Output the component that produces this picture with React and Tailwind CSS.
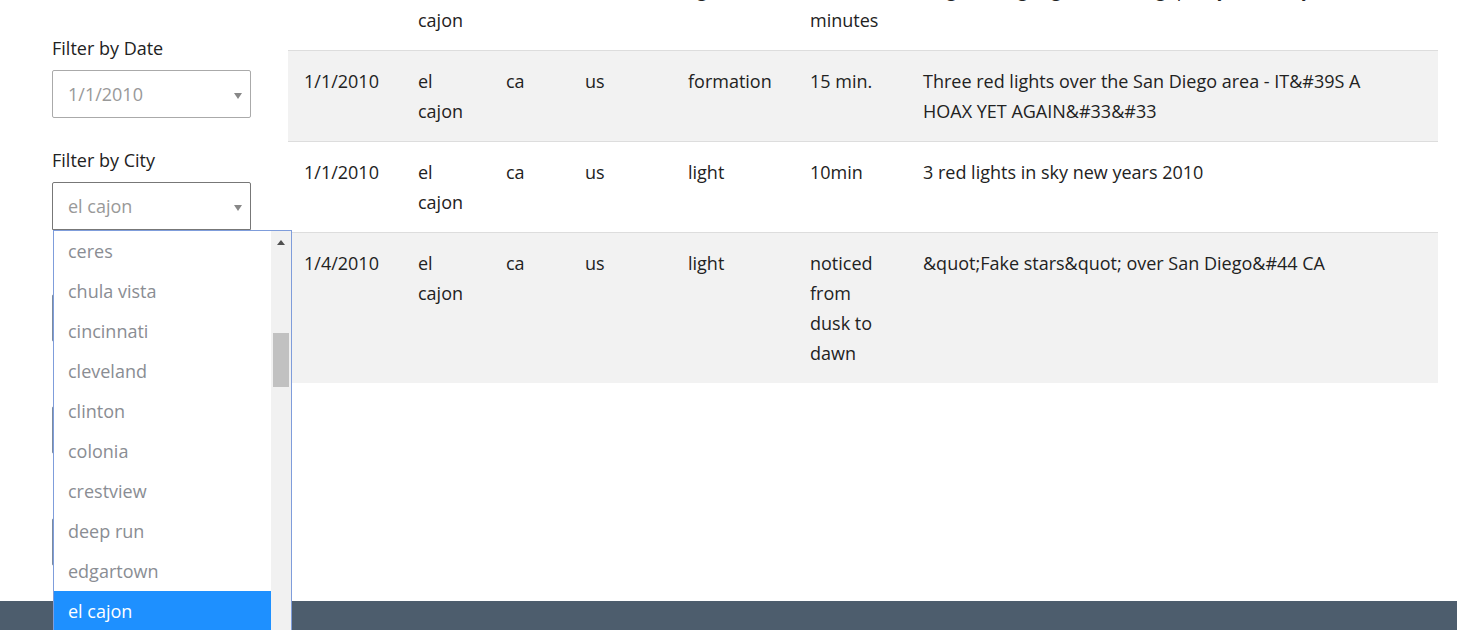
import React from "react";

const rows = [
  ["1/1/2010", "el cajon", "ca", "us", "light", "15 minutes", "Bright orange lights hovering quietly in the sky"],
  ["1/1/2010", "el cajon", "ca", "us", "formation", "15 min.", "Three red lights over the San Diego area - IT&#39S A HOAX YET AGAIN&#33&#33"],
  ["1/1/2010", "el cajon", "ca", "us", "light", "10min", "3 red lights in sky new years 2010"],
  ["1/4/2010", "el cajon", "ca", "us", "light", "noticed from dusk to dawn", "&quot;Fake stars&quot; over San Diego&#44 CA"],
];

const cities = [
  "ceres",
  "chula vista",
  "cincinnati",
  "cleveland",
  "clinton",
  "colonia",
  "crestview",
  "deep run",
  "edgartown",
  "el cajon",
  "el centro",
];

function Caret() {
  return (
    <svg width="8" height="6" viewBox="0 0 8 6" className="absolute right-[8px] top-[22px]">
      <path d="M0 0 L8 0 L4 6 Z" fill="#888" />
    </svg>
  );
}

function Filter({ label, children }) {
  return (
    <div className="mb-[30px] last:mb-0 relative">
      <label className="block h-[24px] leading-[24px] mb-[10px] text-[18px] text-[#222]">{label}</label>
      {children}
    </div>
  );
}

function CityDropdown() {
  return (
    <div className="absolute left-px top-full w-[239px] h-[402px] bg-white border border-[#7f9ddb] flex overflow-hidden z-10">
      <ul className="flex-1">
        {cities.map((c) => (
          <li
            key={c}
            className={
              c === "el cajon"
                ? "h-[40px] leading-[40px] pl-[14px] text-[18px] bg-[#1e90ff] text-white"
                : "h-[40px] leading-[40px] pl-[14px] text-[18px] text-[#8a8d93]"
            }
          >
            {c}
          </li>
        ))}
      </ul>
      <div className="w-[20px] bg-[#f1f1f1] flex flex-col items-center">
        <svg width="8" height="5" viewBox="0 0 8 5" className="mt-[9px]">
          <path d="M0 5 L8 5 L4 0 Z" fill="#505050" />
        </svg>
        <div className="mt-[88px] w-[16px] h-[54px] bg-[#c1c1c1]" />
      </div>
    </div>
  );
}

export default function App() {
  return (
    <div className="min-h-screen flex flex-col bg-white" style={{ fontFamily: '"Open Sans", "Noto Sans", sans-serif' }}>
      <div className="flex flex-1">
        <aside className="w-[288px] shrink-0 pl-[52px] pt-[36px] pb-[35px]">
          <Filter label="Filter by Date">
            <div className="relative w-[199px] h-[48px] border border-[#aaa] rounded-[2px] pl-[15px] leading-[46px] text-[18px] text-[#999]">
              1/1/2010
              <Caret />
            </div>
          </Filter>
          <Filter label="Filter by City">
            <div className="relative w-[199px] h-[48px] border border-[#777] rounded-t-[2px] pl-[15px] leading-[46px] text-[18px] text-[#999]">
              el cajon
              <Caret />
            </div>
            <CityDropdown />
          </Filter>
          {/* state / country / shape filters sit under the open list */}
          <Filter label="">
            <div className="w-[199px] h-[48px] border border-[#7a8ba0] rounded-[2px]" />
          </Filter>
          <Filter label="">
            <div className="w-[199px] h-[48px] border border-[#7a8ba0] rounded-[2px]" />
          </Filter>
          <Filter label="">
            <div className="w-[199px] h-[48px] border border-[#7a8ba0] rounded-[2px]" />
          </Filter>
        </aside>
        <main className="flex-1 pr-[19px] overflow-hidden">
          <table className="w-full table-fixed border-collapse mt-[-41px] text-[18px] leading-[30px] text-[#222]">
            <colgroup>
              <col className="w-[114px]" />
              <col className="w-[88px]" />
              <col className="w-[79px]" />
              <col className="w-[103px]" />
              <col className="w-[122px]" />
              <col className="w-[113px]" />
              <col />
            </colgroup>
            <tbody>
              {rows.map((r, i) => (
                <tr key={i} className={i % 2 === 1 ? "bg-[#f2f2f2] border-t border-[#dddddd]" : "bg-white border-t border-[#dddddd]"}>
                  {r.map((cell, j) => (
                    <td key={j} className={j === 6 ? "align-top pl-[16px] pr-[50px] py-[15px]" : "align-top px-[16px] py-[15px]"}>
                      {cell}
                    </td>
                  ))}
                </tr>
              ))}
            </tbody>
          </table>
        </main>
      </div>
      <footer className="h-[29px] bg-[#4d5d6d]" />
    </div>
  );
}
